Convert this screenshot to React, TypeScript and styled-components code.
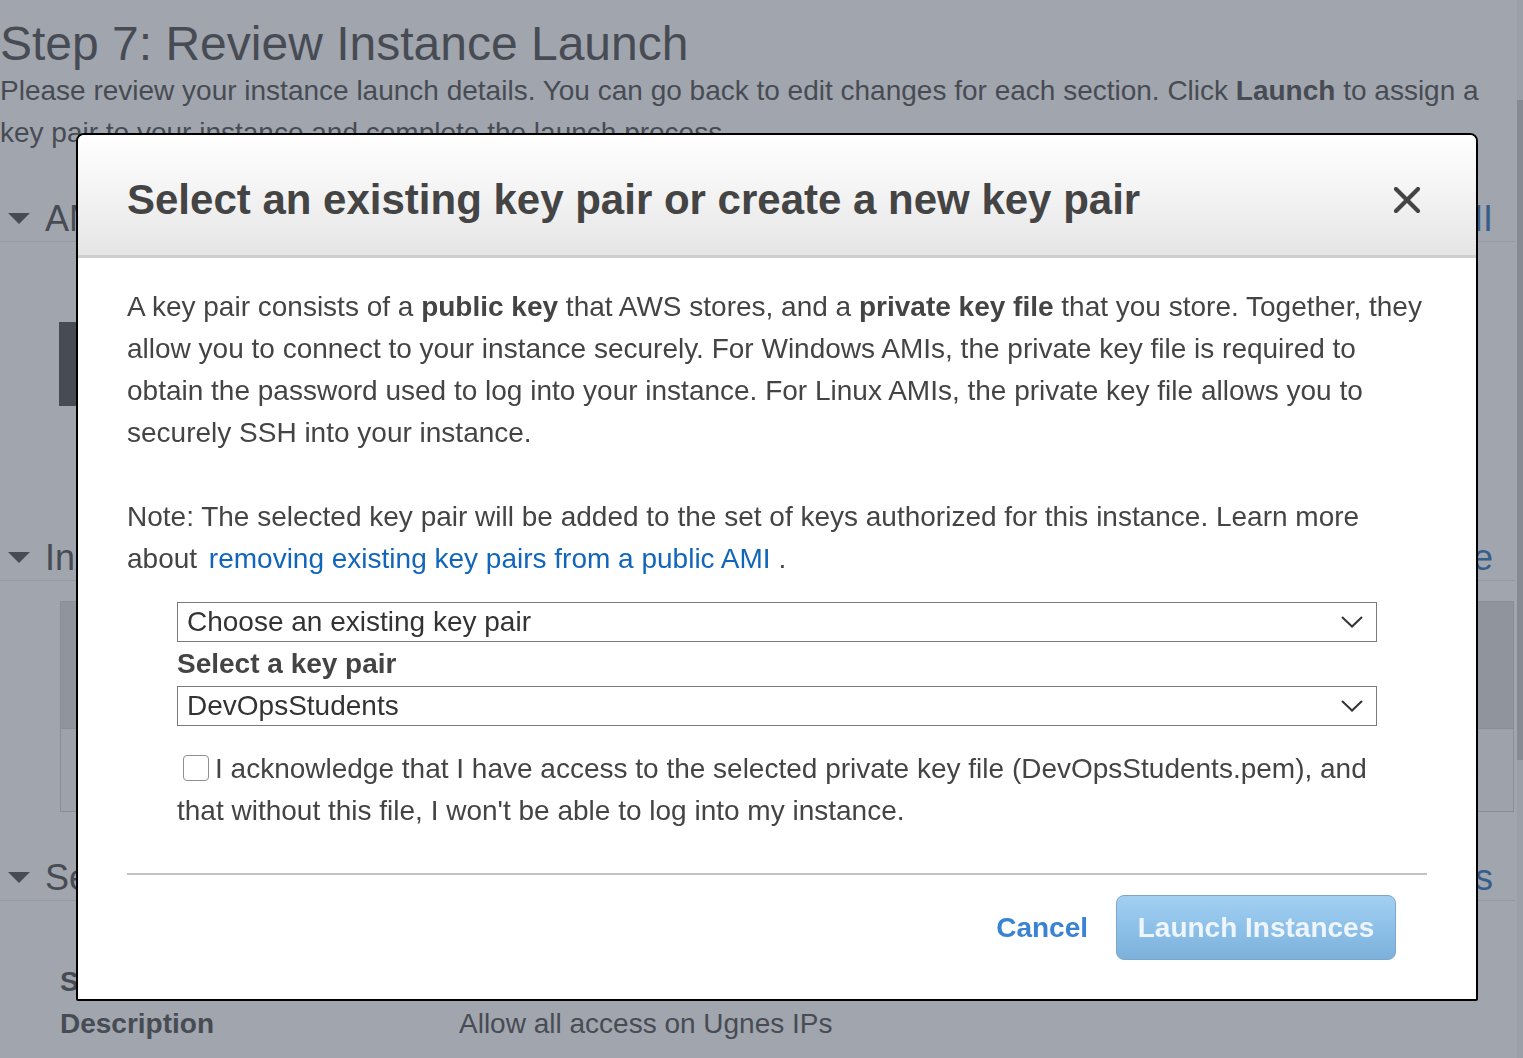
import React from "react";
import styled, { createGlobalStyle } from "styled-components";

const GlobalStyle = createGlobalStyle`
  html, body {
    margin: 0;
    padding: 0;
    background: #ffffff;
    overflow: hidden;
  }
  body {
    font-family: "Liberation Sans", Arial, Helvetica, sans-serif;
    color: #333333;
  }
  * { box-sizing: border-box; }
`;

/* ---------- underlying page ---------- */

const Page = styled.div`
  display: flex;
  width: 100%;
  height: 100vh;
  background: #ffffff;
  overflow: hidden;
`;

const Content = styled.main`
  flex: 1;
  min-width: 0;
  display: flex;
  flex-direction: column;
`;

const ScrollTrack = styled.div`
  width: 6px;
  margin-left: 2px;
  background: #f1f1f1;
  padding-top: 100px;
  display: flex;
  flex-direction: column;
`;

const ScrollThumb = styled.div`
  height: 660px;
  background: #c1c1c1;
`;

const PageTitle = styled.h1`
  margin: 0;
  padding-top: 18px;
  font-size: 48px;
  line-height: 52px;
  font-weight: 400;
  color: #333333;
`;

const PageIntro = styled.p`
  margin: 0;
  font-size: 28px;
  line-height: 42px;
  color: #333333;
  padding-right: 30px;
`;

const Section = styled.section<{ $top: number }>`
  margin-top: ${(p) => p.$top}px;
  display: flex;
  flex-direction: column;
`;

const SectionHeader = styled.div`
  height: 46px;
  display: flex;
  align-items: center;
  justify-content: space-between;
  padding: 0 22px 0 8px;
  border-bottom: 1px solid #e3e3e3;
`;

const SectionTitle = styled.h2`
  margin: 0;
  display: flex;
  align-items: center;
  gap: 15px;
  font-size: 36px;
  font-weight: 400;
  color: #333333;
`;

const EditLink = styled.a`
  font-size: 36px;
  color: #0a5fb0;
  text-decoration: none;
`;

const AmiBody = styled.div`
  height: 293px;
  padding: 80px 0 0 59px;
`;

const AmiLogo = styled.div`
  width: 90px;
  height: 84px;
  background: #333333;
`;

const Table = styled.div`
  margin: 20px 1px 0 60px;
  border: 1px solid #c8c8c8;
  display: flex;
  flex-direction: column;
`;

const TableRow = styled.div<{ $head?: boolean }>`
  display: grid;
  grid-template-columns: 2fr 1fr 1fr 1.3fr 1.6fr 1.7fr 2fr;
  height: ${(p) => (p.$head ? 126 : 83)}px;
  background: ${(p) => (p.$head ? "#d9dada" : "#f8f8f8")};
  border-top: ${(p) => (p.$head ? "none" : "1px solid #c8c8c8")};
  align-items: center;
`;

const Cell = styled.div<{ $head?: boolean; $right?: boolean }>`
  padding: ${(p) => (p.$right ? "0 34px 0 20px" : "0 20px 0 30px")};
  text-align: ${(p) => (p.$right ? "right" : "left")};
  font-size: 28px;
  font-weight: ${(p) => (p.$head ? 700 : 400)};
  color: #333333;
  white-space: ${(p) => (p.$head ? "normal" : "nowrap")};
`;

const SecurityRows = styled.div`
  padding: 60px 0 0 60px;
  display: flex;
  flex-direction: column;
`;

const KeyValue = styled.div`
  display: grid;
  grid-template-columns: 399px 1fr;
  font-size: 28px;
  line-height: 42px;
`;

const Key = styled.span`
  font-weight: 700;
  color: #333333;
`;

const Value = styled.span`
  color: #333333;
`;

const Caret = () => (
  <svg width="22" height="12" viewBox="0 0 22 12" aria-hidden>
    <polygon points="0,0 22,0 11,11" fill="#333333" />
  </svg>
);

/* ---------- overlay + modal ---------- */

const Overlay = styled.div`
  position: fixed;
  inset: 0;
  background: rgba(87, 94, 108, 0.56);
`;

const Modal = styled.div`
  position: absolute;
  left: 76px;
  top: 133px;
  width: 1402px;
  background: #ffffff;
  border: 2px solid #000000;
  border-radius: 8px 8px 2px 2px;
  overflow: hidden;
  display: flex;
  flex-direction: column;
`;

const ModalHeader = styled.header`
  height: 123px;
  padding: 10px 56px 0 49px;
  display: flex;
  align-items: center;
  justify-content: space-between;
  background: linear-gradient(to bottom, #ffffff 0%, #f3f3f3 50%, #e5e5e5 100%);
  border-bottom: 3px solid #cfcfcf;
`;

const ModalTitle = styled.h2`
  margin: 0;
  font-size: 42px;
  font-weight: 700;
  color: #444444;
  line-height: 50px;
`;

const CloseButton = styled.button`
  width: 26px;
  height: 26px;
  padding: 0;
  border: none;
  background: transparent;
  cursor: pointer;
  display: flex;
  align-items: center;
  justify-content: center;
`;

const ModalBody = styled.div`
  padding: 28px 49px 0 49px;
  display: flex;
  flex-direction: column;
`;

const Paragraph = styled.p<{ $gap?: number }>`
  margin: ${(p) => p.$gap ?? 0}px 0 0 0;
  font-size: 28px;
  line-height: 42px;
  color: #444444;
`;

const InlineLink = styled.a`
  color: #1166bb;
  text-decoration: none;
  padding-left: 4px;
`;

const FormBlock = styled.div`
  margin: 22px 0 0 50px;
  width: 1200px;
  display: flex;
  flex-direction: column;
`;

const SelectBox = styled.div`
  height: 40px;
  border: 1px solid #7a7a7a;
  background: #ffffff;
  display: flex;
  align-items: center;
  justify-content: space-between;
  padding: 0 13px 0 9px;
  font-size: 28px;
  color: #333333;
`;

const FieldLabel = styled.label`
  height: 44px;
  display: flex;
  align-items: center;
  font-size: 28px;
  font-weight: 700;
  color: #444444;
`;

const AckText = styled.p`
  margin: 22px 0 0 0;
  font-size: 28px;
  line-height: 42px;
  color: #444444;
`;

const CheckBox = styled.span`
  display: inline-block;
  width: 26px;
  height: 26px;
  margin: 0 6px;
  border: 1px solid #8e8e8e;
  border-radius: 4px;
  background: #ffffff;
  vertical-align: -3px;
`;

const Divider = styled.hr`
  margin: 41px 0 0 0;
  border: none;
  height: 2px;
  background: #c2c2c2;
`;

const Footer = styled.footer`
  display: flex;
  justify-content: flex-end;
  align-items: center;
  gap: 28px;
  padding: 20px 80px 39px 0;
`;

const CancelLink = styled.a`
  font-size: 28px;
  font-weight: 700;
  color: #3a82d2;
  text-decoration: none;
`;

const LaunchButton = styled.button`
  width: 280px;
  height: 65px;
  border: 1px solid #7aa8cc;
  border-radius: 8px;
  background: linear-gradient(to bottom, #a3d0f2 0%, #8cbfe7 55%, #7db1db 100%);
  font-family: "Liberation Sans", Arial, sans-serif;
  font-size: 28px;
  font-weight: 700;
  color: #eef5fc;
  cursor: default;
`;

const Chevron = () => (
  <svg width="22" height="12" viewBox="0 0 22 12" aria-hidden>
    <polyline points="1,1 11,10.5 21,1" fill="none" stroke="#333333" strokeWidth="2" />
  </svg>
);

const CloseIcon = () => (
  <svg width="26" height="26" viewBox="0 0 26 26" aria-hidden>
    <line x1="2" y1="2" x2="24" y2="24" stroke="#444444" strokeWidth="4.2" strokeLinecap="round" />
    <line x1="24" y1="2" x2="2" y2="24" stroke="#444444" strokeWidth="4.2" strokeLinecap="round" />
  </svg>
);

export default function App() {
  return (
    <>
      <GlobalStyle />
      <Page>
        <Content>
          <PageTitle>Step 7: Review Instance Launch</PageTitle>
          <PageIntro>
            Please review your instance launch details. You can go back to edit changes for each
            section. Click <b>Launch</b> to assign a key pair to your instance and complete the
            launch process.
          </PageIntro>

          <Section $top={42}>
            <SectionHeader>
              <SectionTitle>
                <Caret />
                AMI Details
              </SectionTitle>
              <EditLink href="#">Edit AMI</EditLink>
            </SectionHeader>
            <AmiBody>
              <AmiLogo />
            </AmiBody>
          </Section>

          <Section $top={0}>
            <SectionHeader>
              <SectionTitle>
                <Caret />
                Instance Type
              </SectionTitle>
              <EditLink href="#">Edit instance type</EditLink>
            </SectionHeader>
            <Table>
              <TableRow $head>
                <Cell $head>Instance Type</Cell>
                <Cell $head>ECUs</Cell>
                <Cell $head>vCPUs</Cell>
                <Cell $head>Memory (GiB)</Cell>
                <Cell $head>Instance Storage (GB)</Cell>
                <Cell $head>EBS-Optimized Available</Cell>
                <Cell $head>Network</Cell>
              </TableRow>
              <TableRow>
                <Cell>t2.micro</Cell>
                <Cell>-</Cell>
                <Cell>1</Cell>
                <Cell>1</Cell>
                <Cell>EBS only</Cell>
                <Cell>-</Cell>
                <Cell $right>Low to Moderate</Cell>
              </TableRow>
            </Table>
          </Section>

          <Section $top={43}>
            <SectionHeader>
              <SectionTitle>
                <Caret />
                Security Groups
              </SectionTitle>
              <EditLink href="#">Edit security groups</EditLink>
            </SectionHeader>
            <SecurityRows>
              <KeyValue>
                <Key>Security group name</Key>
                <Value>launch-wizard-1</Value>
              </KeyValue>
              <KeyValue>
                <Key>Description</Key>
                <Value>Allow all access on Ugnes IPs</Value>
              </KeyValue>
            </SecurityRows>
          </Section>
        </Content>
        <ScrollTrack>
          <ScrollThumb />
        </ScrollTrack>
      </Page>

      <Overlay>
        <Modal role="dialog" aria-modal="true">
          <ModalHeader>
            <ModalTitle>Select an existing key pair or create a new key pair</ModalTitle>
            <CloseButton aria-label="Close">
              <CloseIcon />
            </CloseButton>
          </ModalHeader>
          <ModalBody>
            <Paragraph>
              A key pair consists of a <b>public key</b> that AWS stores, and a <b>private key file</b>{" "}
              that you store. Together, they allow you to connect to your instance securely. For
              Windows AMIs, the private key file is required to obtain the password used to log into
              your instance. For Linux AMIs, the private key file allows you to securely SSH into your
              instance.
            </Paragraph>
            <Paragraph $gap={42}>
              Note: The selected key pair will be added to the set of keys authorized for this
              instance. Learn more about{" "}
              <InlineLink href="#">removing existing key pairs from a public AMI</InlineLink> .
            </Paragraph>
            <FormBlock>
              <SelectBox>
                <span>Choose an existing key pair</span>
                <Chevron />
              </SelectBox>
              <FieldLabel>Select a key pair</FieldLabel>
              <SelectBox>
                <span>DevOpsStudents</span>
                <Chevron />
              </SelectBox>
              <AckText>
                <CheckBox />I acknowledge that I have access to the selected private key file
                (DevOpsStudents.pem), and that without this file, I won't be able to log into my
                instance.
              </AckText>
            </FormBlock>
            <Divider />
          </ModalBody>
          <Footer>
            <CancelLink href="#">Cancel</CancelLink>
            <LaunchButton type="button">Launch Instances</LaunchButton>
          </Footer>
        </Modal>
      </Overlay>
    </>
  );
}
